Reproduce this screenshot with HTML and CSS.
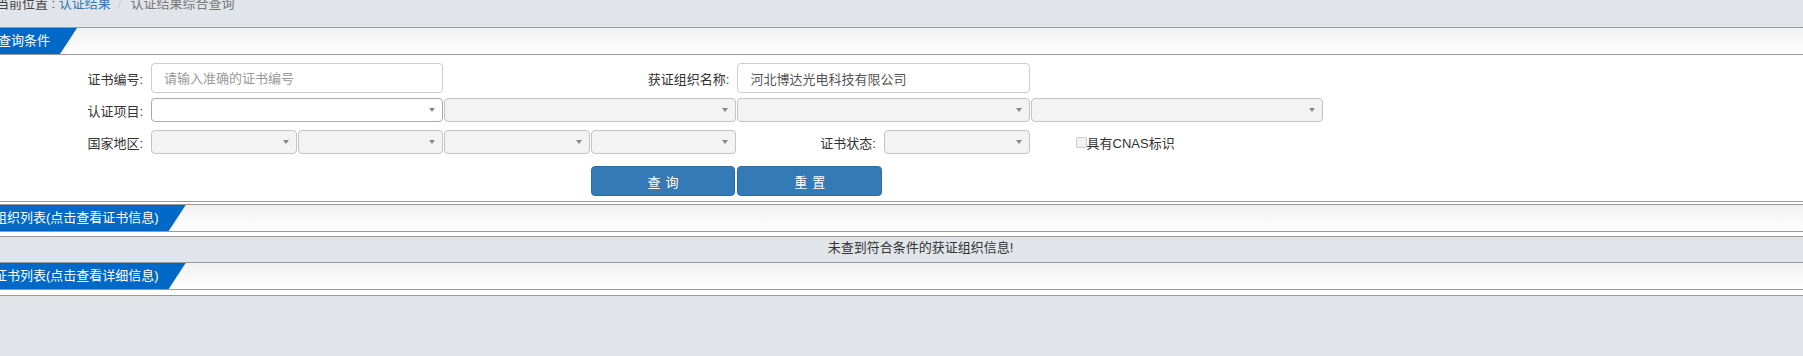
FILE: index.html
```html
<!DOCTYPE html>
<html lang="zh-CN">

<head>
    <meta charset="UTF-8">
    <meta name="viewport" content="width=device-width, initial-scale=1.0">
    <title>认证结果综合查询</title>
    <link rel="stylesheet" href="styles.css">
</head>

<body>
    <div class="crumb">
        <span class="crumb-here">当前位置 : </span><a class="crumb-link" href="#">认证结果</a><span class="crumb-sep">/</span><span class="crumb-active">认证结果综合查询</span>
    </div>

    <section class="panel panel-query">
        <div class="panel-head"><span class="tab tab-short">查询条件</span></div>
        <form class="query-form">
            <div class="form-row row-text">
                <label class="field-label">证书编号:</label>
                <input class="text-input span-2" type="text" placeholder="请输入准确的证书编号">
                <label class="field-label span-2">获证组织名称:</label>
                <input class="text-input span-2" type="text" value="河北博达光电科技有限公司">
            </div>
            <div class="form-row row-select">
                <label class="field-label">认证项目:</label>
                <span class="select-box span-2"><select></select></span>
                <span class="select-box span-2"><select disabled></select></span>
                <span class="select-box span-2"><select disabled></select></span>
                <span class="select-box span-2"><select disabled></select></span>
            </div>
            <div class="form-row row-select row-area">
                <label class="field-label">国家地区:</label>
                <span class="select-box"><select disabled></select></span>
                <span class="select-box"><select disabled></select></span>
                <span class="select-box"><select disabled></select></span>
                <span class="select-box"><select disabled></select></span>
                <label class="field-label">证书状态:</label>
                <span class="select-box"><select disabled></select></span>
                <label class="check-cell span-2"><input type="checkbox" disabled>具有CNAS标识</label>
            </div>
            <div class="form-row row-buttons">
                <button class="btn btn-query" type="button">查询</button>
                <button class="btn" type="reset">重置</button>
            </div>
        </form>
    </section>

    <section class="panel panel-org">
        <div class="panel-head"><span class="tab">组织列表(点击查看证书信息)</span></div>
        <div class="empty-wrap">
            <div class="empty-msg">未查到符合条件的获证组织信息!</div>
        </div>
    </section>

    <section class="panel panel-cert">
        <div class="panel-head"><span class="tab">证书列表(点击查看详细信息)</span></div>
    </section>
</body>

</html>
```

FILE: styles.css
```css
* {
    margin: 0;
    padding: 0;
    box-sizing: border-box;
}

body {
    font-family: "Liberation Sans", "Noto Sans CJK SC", sans-serif;
    font-size: 13px;
    color: #333;
    background-color: #e1e5ea;
    min-height: 100vh;
}

/* breadcrumb */
.crumb {
    height: 27px;
    margin-left: -4px;
    white-space: nowrap;
    overflow: hidden;
}

.crumb > span,
.crumb > a {
    display: inline-block;
    line-height: 14px;
    margin-top: -3px;
    vertical-align: top;
    white-space: pre;
}

.crumb-here {
    color: #444;
}

.crumb-link {
    color: #337ab7;
    text-decoration: none;
}

.crumb-sep {
    color: #ccc;
    padding: 0 9px 0 7px;
}

.crumb-active {
    color: #777;
}

/* panels */
.panel {
    background-color: #fff;
}

.panel-head {
    height: 28px;
    border-top: 1px solid #9a9a9a;
    border-bottom: 1px solid #9a9a9a;
    background: linear-gradient(to bottom, #f1f1f1, #ffffff);
    overflow: hidden;
}

.tab {
    display: inline-block;
    height: 26px;
    line-height: 26px;
    padding-right: 27px;
    margin-left: -6px;
    color: #fff;
    background-color: #0068c6;
    clip-path: polygon(0 0, 100% 0, calc(100% - 17px) 100%, 0 100%);
}

.tab-short {
    margin-left: -2px;
}

.panel-query {
    border-bottom: 1px solid #9a9a9a;
}

.panel-org {
    padding-top: 2px;
}

.panel-cert {
    padding-bottom: 5px;
    border-bottom: 1px solid #9a9a9a;
}

/* query form */
.query-form {
    padding: 8px 0 5px;
}

.form-row {
    display: grid;
    grid-template-columns: 151px repeat(8, 146.6px);
    align-items: center;
}

.row-text {
    height: 30px;
}

.row-select {
    height: 24px;
    margin-top: 5px;
}

.row-area {
    margin-top: 8px;
}

.row-buttons {
    height: 30px;
    margin-top: 12px;
}

.span-2 {
    grid-column: span 2;
}

.field-label {
    text-align: right;
    padding-right: 8px;
    color: #333;
    white-space: nowrap;
}

.text-input {
    height: 30px;
    margin-right: 1px;
    padding: 0 12px;
    border: 1px solid #ccc;
    border-radius: 4px;
    font-family: inherit;
    font-size: 13px;
    color: #555;
    outline: none;
}

.text-input::placeholder {
    color: #999;
}

.select-box {
    position: relative;
    display: block;
    height: 24px;
    margin-right: 1px;
}

.select-box select {
    appearance: none;
    width: 100%;
    height: 24px;
    border: 1px solid #aaa;
    border-radius: 4px;
    background-color: #fff;
}

.select-box select:disabled {
    background-color: #eee;
}

.select-box::after {
    content: "";
    position: absolute;
    right: 8px;
    top: 10px;
    border-left: 3.5px solid transparent;
    border-right: 3.5px solid transparent;
    border-top: 4px solid #888;
}

.check-cell {
    display: flex;
    align-items: center;
    padding-left: 45px;
    color: #333;
    white-space: nowrap;
}

.check-cell input {
    appearance: none;
    width: 11px;
    height: 11px;
    border: 1px solid #ccc;
    border-radius: 2px;
    background-color: #f2f2f2;
}

.btn {
    height: 30px;
    margin-right: 2px;
    border: 1px solid #2e6da4;
    border-radius: 4px;
    background-color: #337ab7;
    color: #fff;
    font-family: inherit;
    font-size: 13px;
    letter-spacing: 5px;
    text-indent: 5px;
}

.btn-query {
    grid-column-start: 5;
}

/* empty result */
.empty-wrap {
    padding-top: 4px;
}

.empty-msg {
    height: 26px;
    border-top: 1px solid #9a9a9a;
    background-color: #e1e5ea;
    line-height: 22px;
    text-align: center;
    padding-left: 38px;
    color: #333;
}
```
